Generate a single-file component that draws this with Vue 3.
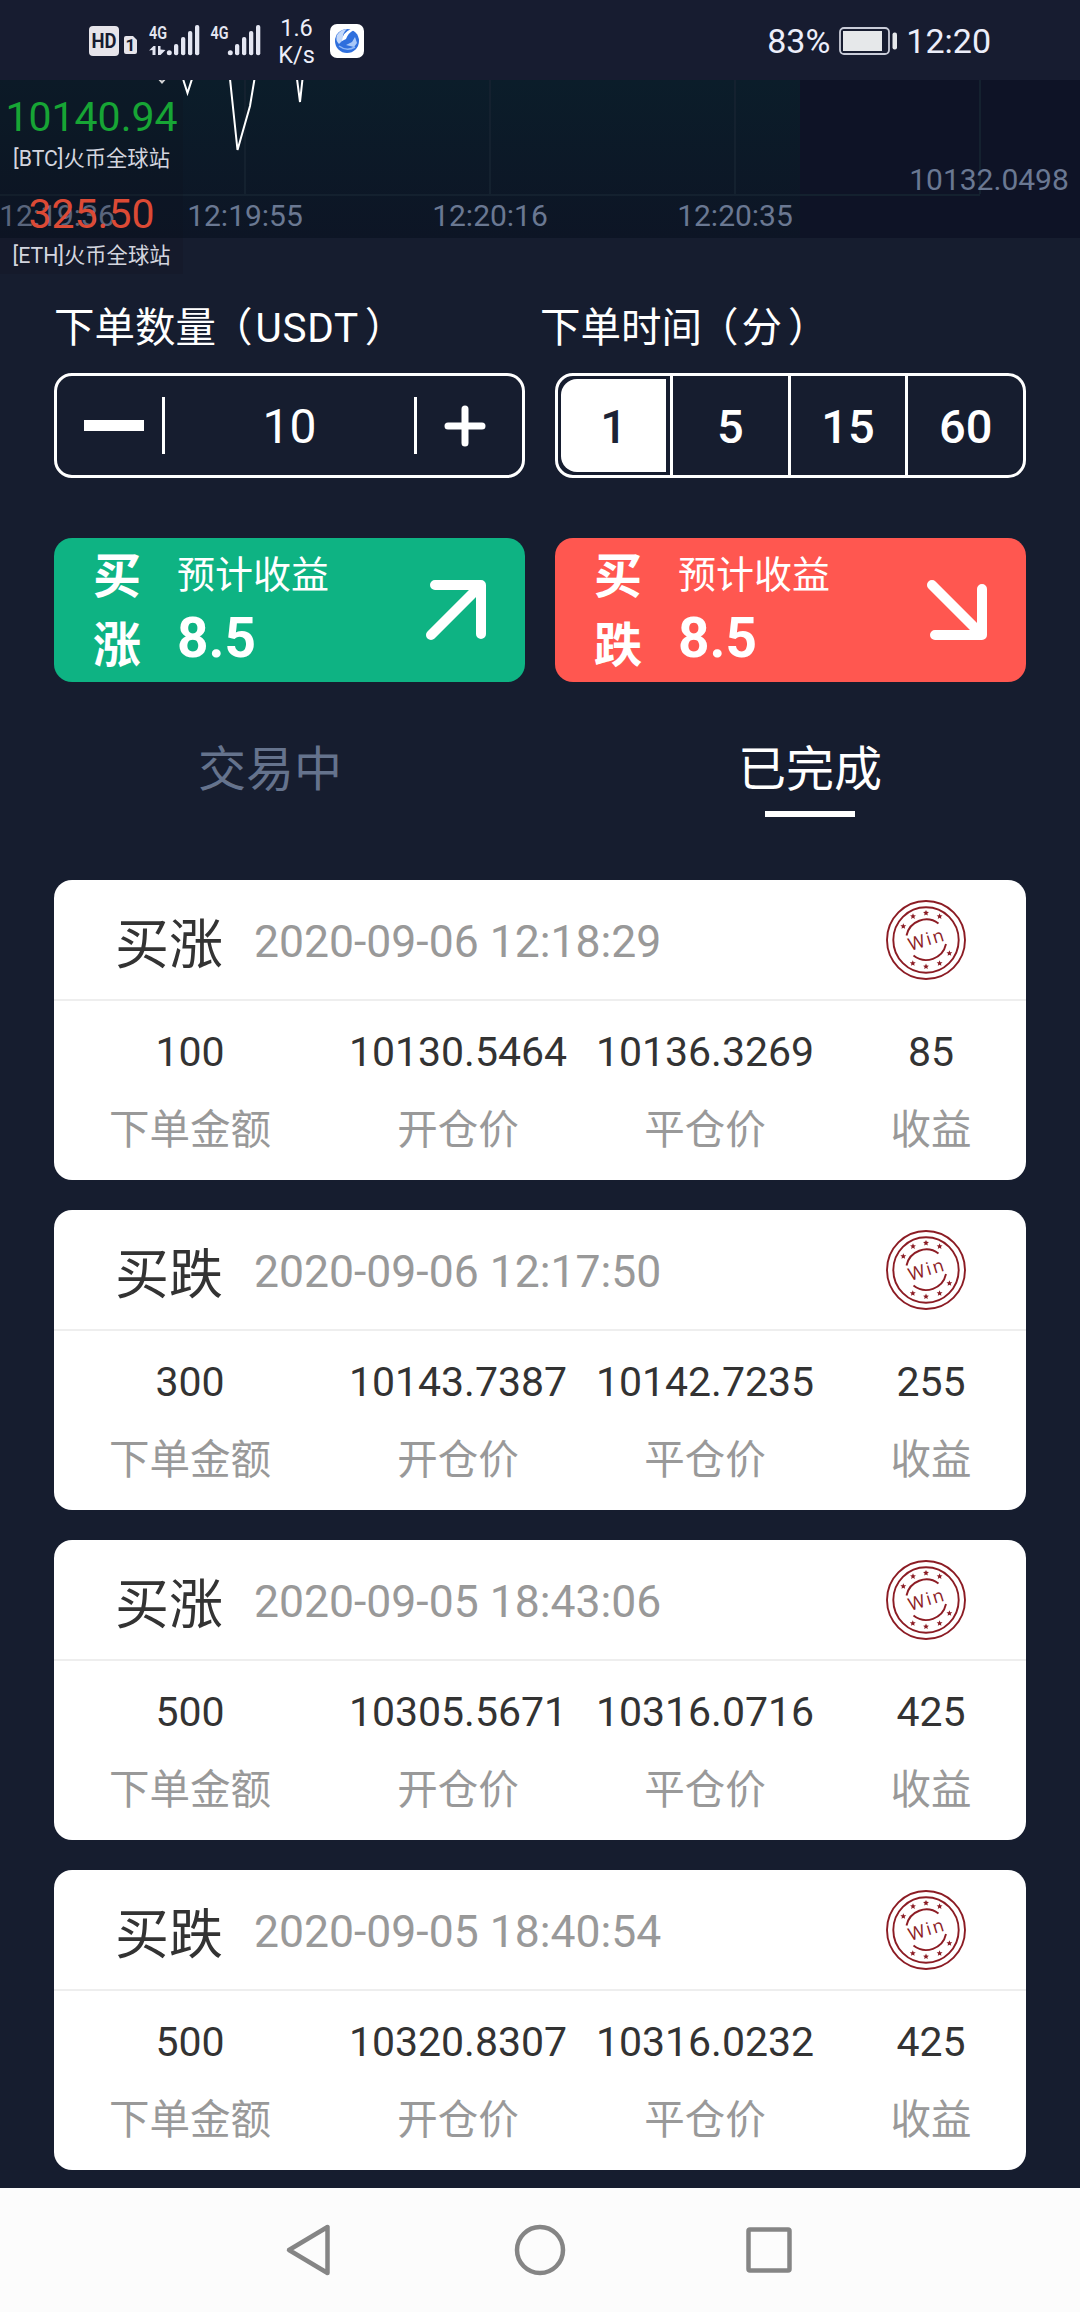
<script setup>
import { ref } from 'vue'

const amount = ref(10)
const minutes = [1, 5, 15, 60]
const activeMinute = ref(1)
const activeTab = ref('done')

const tabs = [
  { key: 'trading', label: '交易中' },
  { key: 'done', label: '已完成' }
]

const tickers = [
  { price: '10140.94', name: '[BTC]火币全球站', color: 'green' },
  { price: '325.50', name: '[ETH]火币全球站', color: 'red' }
]

const timeLabels = [
  { x: 57, text: '12:19:36' },
  { x: 245, text: '12:19:55' },
  { x: 490, text: '12:20:16' },
  { x: 735, text: '12:20:35' }
]

const orders = [
  { type: '买涨', time: '2020-09-06 12:18:29', amount: '100', open: '10130.5464', close: '10136.3269', profit: '85' },
  { type: '买跌', time: '2020-09-06 12:17:50', amount: '300', open: '10143.7387', close: '10142.7235', profit: '255' },
  { type: '买涨', time: '2020-09-05 18:43:06', amount: '500', open: '10305.5671', close: '10316.0716', profit: '425' },
  { type: '买跌', time: '2020-09-05 18:40:54', amount: '500', open: '10320.8307', close: '10316.0232', profit: '425' }
]

const stars = [
  [17.3, 26.3], [27, 16.4], [40, 13], [53.6, 16.4],
  [63.4, 53.3], [53.6, 63.3], [40, 66.6], [26.8, 63.3]
]

//五角星的顶点
function starPoints([cx, cy]) {
  const pts = []
  for (let i = 0; i < 10; i++) {
    const r = i % 2 ? 1.4 : 3.1
    const a = (i * 36 - 90) * Math.PI / 180
    pts.push(`${(cx + r * Math.cos(a)).toFixed(2)},${(cy + r * Math.sin(a)).toFixed(2)}`)
  }
  return pts.join(' ')
}

function step(n) {
  amount.value = Math.max(10, amount.value + n)
}
</script>

<template>
  <div class="page">
    <header class="status">
      <svg class="status-icons" width="180" height="40" viewBox="0 0 180 40">
        <rect x="0" y="6" width="30" height="30" rx="4" fill="#e6e4ea" />
        <text x="15" y="28" class="hd" text-anchor="middle" textLength="25" lengthAdjust="spacingAndGlyphs">HD</text>
        <path d="M37 16h7l4 4v12a2 2 0 0 1-2 2h-9a2 2 0 0 1-2-2V18a2 2 0 0 1 2-2z" fill="#e6e4ea" />
        <text x="41.5" y="31" class="sim" text-anchor="middle">1</text>
        <g fill="#e4e6f2">
          <text x="60" y="18.5" class="net" textLength="18" lengthAdjust="spacingAndGlyphs">4G</text>
          <path d="M60 30.5l4.500-4.500h2v9h-3v-5z M69 26h2.500v3.500l5 .5-5 5H69z" />
          <circle cx="80.300" cy="32.700" r="2.500" />
          <rect x="85" y="24" width="4.300" height="11.300" rx="2" />
          <rect x="92" y="17" width="4.300" height="18.300" rx="2" />
          <rect x="99" y="11" width="4.300" height="24.300" rx="2" />
          <rect x="106" y="5" width="4.300" height="30.300" rx="2" />
          <text x="121.500" y="18.500" class="net" textLength="18" lengthAdjust="spacingAndGlyphs">4G</text>
          <circle cx="141.300" cy="32.700" r="2.500" />
          <rect x="146" y="24" width="4.300" height="11.300" rx="2" />
          <rect x="153" y="17" width="4.300" height="18.300" rx="2" />
          <rect x="160" y="11" width="4.300" height="24.300" rx="2" />
          <rect x="167" y="5" width="4.300" height="30.300" rx="2" />
        </g>
      </svg>
      <div class="speed"><span>1.6</span><span>K/s</span></div>
      <svg class="app-icon" width="34" height="34" viewBox="0 0 34 34">
        <rect width="34" height="34" rx="7" fill="#fff" />
        <circle cx="17" cy="17" r="12" fill="#2f6fdd" />
        <path d="M7 11q4-6 10-6q-5 4-4 11l-4 4q-4-4-2-9z" fill="#c3d8fa" />
        <path d="M12 17q0-8 9-12l3 1q-6 3-8 9z" fill="#fff" />
        <path d="M16 21l6-3 3-5 2 6-3 4z" fill="#a9c8f8" />
        <path d="M9 22q8 6 16 1" stroke="#8db6f5" stroke-width="1.500" fill="none" />
      </svg>
      <div class="status-right">
        <span>83%</span>
        <svg width="59" height="28" viewBox="0 0 59 28">
          <rect x="1" y="1" width="49" height="26" rx="4" fill="none" stroke="#c9ccd8" stroke-width="1.800" />
          <rect x="4" y="4" width="39" height="20" fill="#e6e8ea" />
          <rect x="53.500" y="5.500" width="4.500" height="17" rx="2" fill="#e6e8ea" />
        </svg>
        <span>12:20</span>
      </div>
    </header>

    <section class="chart">
      <svg width="1080" height="158" viewBox="0 0 1080 158">
        <defs>
          <linearGradient id="area" x1="0" y1="0" x2="0" y2="1">
            <stop offset="0" stop-color="#0b1d2a" />
            <stop offset="1" stop-color="#0d1525" />
          </linearGradient>
        </defs>
        <rect width="1080" height="158" fill="#0e1326" />
        <rect width="800" height="158" fill="url(#area)" />
        <g stroke="#14212f" stroke-width="2">
          <path d="M245 0V114M490 0V114M735 0V114M980 0V114M0 115H980" />
        </g>
        <g fill="none" stroke="#fff" stroke-width="2">
          <path d="M159 -1L162 2.500L165 -1" />
          <path d="M183 -1L187.500 13L192 -1" />
          <path d="M230 -1L237.500 70L250 26L254.500 -1" />
          <path d="M297 -1L300 22L302.500 -1" />
        </g>
        <g class="axis" text-anchor="middle">
          <text v-for="t in timeLabels" :key="t.text" :x="t.x" y="145.500">{{ t.text }}</text>
          <text x="989" y="110">10132.0498</text>
        </g>
      </svg>
      <div class="float">
        <div v-for="t in tickers" :key="t.name" class="ticker">
          <span class="price" :class="t.color">{{ t.price }}</span>
          <span class="name">{{ t.name }}</span>
        </div>
      </div>
    </section>

    <main class="content">
      <div class="labels">
        <div>下单数量<i class="open">（</i><span class="unit">USDT</span><i class="close">）</i></div>
        <div>下单时间<i class="open">（</i>分<i class="close">）</i></div>
      </div>

      <div class="row">
        <div class="stepper">
          <button class="step" @click="step(-10)"><i class="minus"></i></button>
          <span class="value">{{ amount }}</span>
          <button class="step plus" @click="step(10)">
            <svg width="42" height="42" viewBox="0 0 42 42">
              <path d="M21 4V38M4 21H38" stroke="#fff" stroke-width="7" stroke-linecap="round" />
            </svg>
          </button>
        </div>
        <div class="minutes">
          <span
              v-for="m in minutes"
              :key="m"
              class="minute"
              :class="{ active: m === activeMinute }"
              @click="activeMinute = m"
          ><b>{{ m }}</b></span>
        </div>
      </div>

      <div class="row trade">
        <div class="buy up">
          <div class="side"><span>买</span><span>涨</span></div>
          <div class="expect"><span>预计收益</span><b>8.5</b></div>
          <svg width="62" height="62" viewBox="0 0 62 62">
            <path d="M10 6H56V55M56 6L6 56" />
          </svg>
        </div>
        <div class="buy down">
          <div class="side"><span>买</span><span>跌</span></div>
          <div class="expect"><span>预计收益</span><b>8.5</b></div>
          <svg width="62" height="62" viewBox="0 0 62 62">
            <path d="M9 56H56V10M56 56L6 6" />
          </svg>
        </div>
      </div>

      <nav class="tabs">
        <div
            v-for="t in tabs"
            :key="t.key"
            class="tab"
            :class="{ active: t.key === activeTab }"
            @click="activeTab = t.key"
        >{{ t.label }}</div>
      </nav>

      <div class="orders">
        <article v-for="o in orders" :key="o.time" class="order">
          <div class="order-head">
            <span class="type">{{ o.type }}</span>
            <span class="time">{{ o.time }}</span>
            <svg class="stamp" width="80" height="80" viewBox="0 0 80 80">
              <g fill="none" stroke="#8c1c24" stroke-width="1.900">
                <circle cx="40" cy="40" r="39" />
                <circle cx="40" cy="40" r="32.700" />
                <path d="M20.500 35.500A20.300 20.300 0 0 1 52.500 23.500M27.500 55.500A20.300 20.300 0 0 0 60 44" />
              </g>
              <polygon v-for="(s, i) in stars" :key="i" :points="starPoints(s)" fill="#8c1c24" />
              <text x="41" y="46" text-anchor="middle" transform="rotate(-17 40 40)">Win</text>
            </svg>
          </div>
          <div class="order-body">
            <div class="cell"><span>{{ o.amount }}</span><em>下单金额</em></div>
            <div class="cell"><span>{{ o.open }}</span><em>开仓价</em></div>
            <div class="cell"><span>{{ o.close }}</span><em>平仓价</em></div>
            <div class="cell"><span>{{ o.profit }}</span><em>收益</em></div>
          </div>
        </article>
      </div>
    </main>

    <footer class="navbar">
      <svg width="52" height="56" viewBox="0 0 52 56">
        <path d="M5 28L43.500 5V51Z" />
      </svg>
      <svg width="56" height="56" viewBox="0 0 56 56">
        <circle cx="28" cy="28" r="23" />
      </svg>
      <svg width="52" height="56" viewBox="0 0 52 56">
        <rect x="4.500" y="7.500" width="41" height="41" rx="1.500" />
      </svg>
    </footer>
  </div>
</template>

<style>
body {
  margin: 0;
  background: #161d2f;
}
</style>

<style scoped>
.page {
  display: flex;
  flex-direction: column;
  width: 1080px;
  height: 2312px;
  overflow: hidden;
  background: #161d2f;
  color: #fff;
  font-family: Roboto, "Noto Sans CJK SC", sans-serif;
}

.status {
  display: flex;
  box-sizing: border-box;
  height: 80px;
  padding: 0 89px 0 89px;
  background: #171c30;
  color: #eceefa;
}

.status-icons {
  margin-top: 20px;
}

.hd {
  font-size: 21px;
  font-weight: 700;
  fill: #171c30;
}

.sim {
  font-size: 17px;
  font-weight: 700;
  fill: #171c30;
}

.net {
  font-size: 19px;
  font-weight: 600;
}

.speed {
  display: flex;
  flex-direction: column;
  width: 55px;
  margin-top: 15px;
  text-align: center;
  font-size: 23.5px;
  line-height: 27px;
}

.app-icon {
  margin: 24px 0 0 6px;
}

.status-right {
  display: flex;
  align-items: center;
  margin-left: auto;
  height: 82px;
  font-size: 34px;
}

.status-right svg {
  margin: 0 8px 0 9px;
}

.chart {
  position: relative;
  height: 158px;
}

.chart svg {
  display: block;
}

.axis text {
  font-size: 30px;
  fill: #6a7892;
}

/* 悬浮行情窗 */
.float {
  position: absolute;
  left: 0;
  top: 0;
  width: 183px;
  height: 194px;
  padding-top: 10px;
  box-sizing: border-box;
  background: rgba(14, 18, 28, 0.18);
}

.ticker {
  display: flex;
  flex-direction: column;
  align-items: center;
  height: 97px;
}

.price {
  font-size: 41px;
  line-height: 54px;
}

.price.green {
  color: #17a535;
}

.price.red {
  color: #dc4a35;
}

.name {
  font-size: 21.3px;
  line-height: 30px;
  color: #d3d5df;
}

.content {
  flex: 1;
  padding-top: 62px;
}

.labels {
  display: flex;
  padding-left: 54px;
  font-size: 40.5px;
  line-height: 56px;
}

.labels > div {
  width: 486px;
}

.labels i {
  font-style: normal;
}

.labels .open {
  margin-left: -4px;
  margin-right: 3px;
}

.labels .close {
  margin-left: 6px;
}

.unit {
  letter-spacing: 0.7px;
}

.row {
  display: flex;
  gap: 30px;
  padding: 17px 54px 0;
}

.row > div {
  flex: 1;
  box-sizing: border-box;
}

.stepper,
.minutes {
  display: flex;
  align-items: center;
  height: 105px;
  border: 3px solid #fff;
  border-radius: 18px;
  overflow: hidden;
}

.step {
  display: flex;
  align-items: center;
  box-sizing: border-box;
  width: 108px;
  height: 57px;
  padding: 0 0 0 27px;
  background: none;
  border: 0;
  border-right: 3px solid #fff;
}

.step.plus {
  border-right: 0;
  border-left: 3px solid #fff;
}

.minus {
  width: 60px;
  height: 11px;
  background: #fff;
}

.value {
  flex: 1;
  padding-top: 1px;
  text-align: center;
  font-size: 48px;
}

.minute {
  display: flex;
  flex: 1;
  height: 99px;
  box-sizing: border-box;
  font-size: 48px;
}

.minute:first-child {
  flex: none;
  width: 112px;
}

.minute + .minute {
  border-left: 3px solid #fff;
}

.minute b {
  display: flex;
  align-items: center;
  justify-content: center;
  width: 100%;
  padding-top: 1px;
  font-size: 47px;
  font-weight: 500;
}

.minute.active b {
  margin: 3px;
  margin-right: 4px;
  background: #fff;
  color: #1c2336;
  border-radius: 16px 0 0 16px;
}

.trade {
  padding-top: 60px;
}

.buy {
  display: flex;
  align-items: center;
  height: 144px;
  padding: 0 38px 0 39px;
  border-radius: 18px;
}

.up {
  background: #0eb383;
}

.down {
  background: #ff5750;
}

.side {
  display: flex;
  flex-direction: column;
  width: 84px;
  font-size: 48px;
  font-weight: 700;
  line-height: 69px;
  padding-top: 2px;
}

.expect {
  display: flex;
  flex-direction: column;
  flex: 1;
  font-size: 38px;
  line-height: 64px;
  padding-bottom: 8px;
}

.expect b {
  font-size: 55px;
  line-height: 62px;
}

.buy svg path {
  fill: none;
  stroke: #fff;
  stroke-width: 10;
  stroke-linecap: round;
  stroke-linejoin: round;
}

.tabs {
  display: flex;
  margin-top: 58px;
  height: 140px;
}

.tab {
  display: flex;
  flex: 1;
  flex-direction: column;
  align-items: center;
  font-size: 48px;
  line-height: 60px;
  color: #65738d;
}

.tab.active {
  color: #fff;
}

.tab.active::after {
  content: '';
  width: 90px;
  height: 6px;
  margin-top: 11px;
  background: #fff;
}

.orders {
  display: flex;
  flex-direction: column;
  gap: 30px;
  padding: 0 54px;
}

.order {
  height: 300px;
  background: #fff;
  border-radius: 18px;
  color: #333;
}

.order-head {
  display: flex;
  align-items: center;
  height: 119px;
  padding: 0 60px 0 61px;
  border-bottom: 2px solid #eee;
}

.type {
  width: 139px;
  padding-top: 2px;
  font-size: 54px;
}

.time {
  flex: 1;
  padding-top: 4px;
  font-size: 44.5px;
  color: #999;
}

.stamp text {
  font-family: "Open Sans", sans-serif;
  font-size: 18px;
  letter-spacing: 2px;
  fill: #8c1c24;
}

.order-body {
  display: grid;
  grid-template-columns: 272px 264px 230px 1fr;
  padding-top: 23px;
}

.cell {
  display: flex;
  flex-direction: column;
  align-items: center;
  gap: 22px;
  font-size: 41px;
  line-height: 56px;
}

.cell:last-child {
  padding-left: 16px;
}

.cell em {
  font-size: 40.5px;
  font-style: normal;
  color: #999;
}

.navbar {
  display: flex;
  align-items: center;
  justify-content: space-between;
  box-sizing: border-box;
  height: 124px;
  padding: 0 284px 0 284px;
  background: #fcfcfc;
}

.navbar svg {
  fill: none;
  stroke: #858585;
  stroke-width: 4.5;
  stroke-linejoin: round;
}
</style>
